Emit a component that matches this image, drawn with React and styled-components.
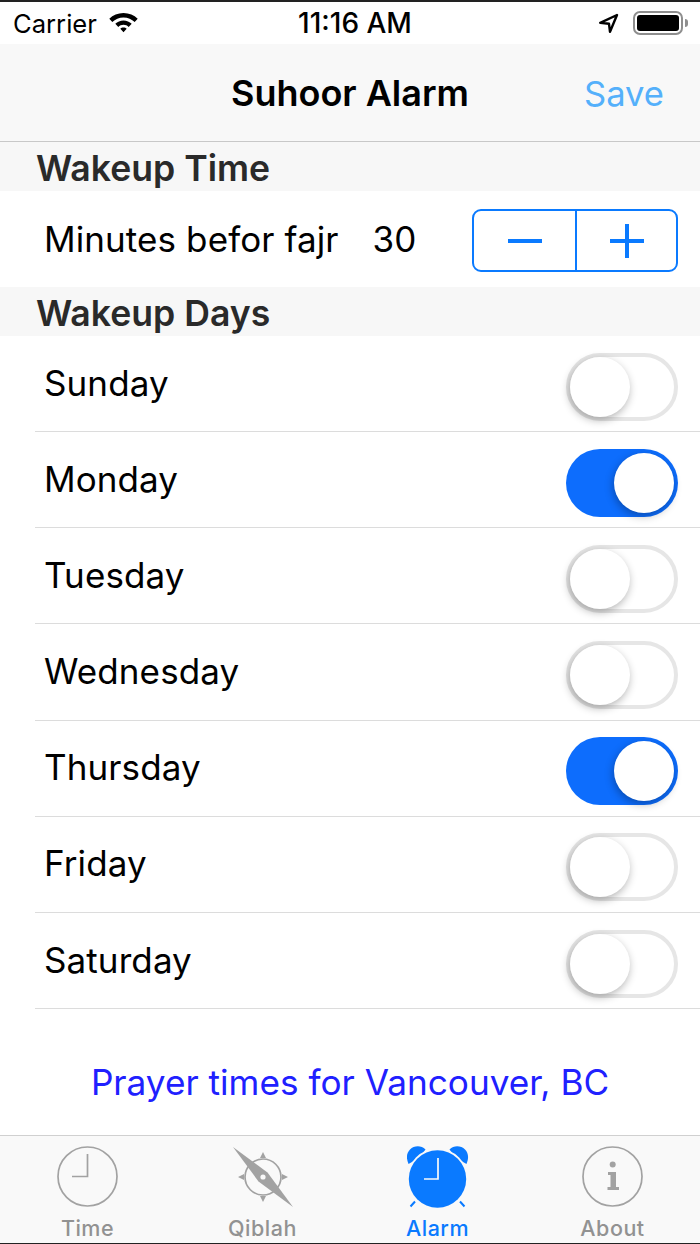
import styled, { createGlobalStyle } from "styled-components";

const GlobalStyle = createGlobalStyle`
  html, body {
    margin: 0;
    padding: 0;
    background: #fff;
  }
  body {
    font-family: "Inter", "Liberation Sans", sans-serif;
  }
`;

const Phone = styled.div`
  width: 700px;
  height: 1244px;
  display: flex;
  flex-direction: column;
  background: #fff;
  overflow: hidden;
  border-top: 2px solid #222;
  border-bottom: 1px solid #222;
  box-sizing: border-box;
`;

const StatusBar = styled.div`
  height: 42px;
  display: grid;
  grid-template-columns: 1fr auto 1fr;
  align-items: center;
  padding: 0 17px 0 13px;
  color: #000;
`;

const StatusLeft = styled.div`
  display: flex;
  align-items: center;
  gap: 11px;
  font-size: 25.6px;
`;

const StatusTime = styled.div`
  margin-left: 14px;
  font-size: 28px;
  font-weight: 500;
`;

const StatusRight = styled.div`
  display: flex;
  align-items: center;
  justify-content: flex-end;
  gap: 14px;
`;

const Battery = styled.div`
  position: relative;
  width: 50px;
  height: 24px;
  border: 2px solid #8e8e8e;
  border-radius: 7px;
  box-sizing: border-box;
  padding: 2px;
  &::before {
    content: "";
    display: block;
    height: 100%;
    background: #000;
    border-radius: 3px;
  }
  &::after {
    content: "";
    position: absolute;
    right: -7px;
    top: 6px;
    width: 3px;
    height: 8px;
    background: #8e8e8e;
    border-radius: 0 3px 3px 0;
  }
`;

const NavBar = styled.div`
  height: 98px;
  display: grid;
  grid-template-columns: 1fr auto 1fr;
  align-items: center;
  background: #f8f8f8;
  border-bottom: 1px solid #c8c8c8;
  box-sizing: border-box;
`;

const NavTitle = styled.div`
  grid-column: 2;
  font-size: 36px;
  font-weight: 600;
  color: #000;
`;

const SaveButton = styled.div`
  justify-self: end;
  margin-right: 36px;
  font-size: 34.6px;
  color: #54b0fb;
`;

const SectionHeader = styled.div`
  height: 49px;
  display: flex;
  align-items: center;
  padding: 4px 0 0 36px;
  background: #f7f7f7;
  font-size: 35.6px;
  font-weight: 600;
  color: #2a2a2a;
  box-sizing: border-box;
`;

const StepperRow = styled.div`
  height: 96px;
  display: flex;
  align-items: center;
  padding: 0 22px 0 44px;
  font-size: 35px;
  letter-spacing: 0.1px;
  color: #000;
`;

const StepperValue = styled.span`
  margin-left: 34px;
`;

const Stepper = styled.div`
  margin: 3px 0 0 auto;
  width: 206px;
  height: 63px;
  display: grid;
  grid-template-columns: 1fr 1fr;
  border: 2px solid #0a7aff;
  border-radius: 9px;
  box-sizing: border-box;
`;

const StepperButton = styled.div`
  display: flex;
  align-items: center;
  justify-content: center;
  color: #0a7aff;
  & + & {
    border-left: 2px solid #0a7aff;
  }
`;

const DayList = styled.div`
  padding-left: 35px;
`;

const DayRow = styled.div`
  height: 96.17px;
  display: flex;
  align-items: center;
  justify-content: space-between;
  padding: 0 22px 2px 9px;
  border-bottom: 1px solid #dcdcdc;
  box-sizing: border-box;
  font-size: 35px;
  letter-spacing: 0.1px;
  color: #000;
`;

const Switch = styled.div`
  position: relative;
  margin-top: 8px;
  width: 112px;
  height: 68px;
  border-radius: 34px;
  box-sizing: border-box;
  background: ${(p) => (p.$on ? "#0d6dfd" : "#fff")};
  border: ${(p) => (p.$on ? "none" : "4px solid #e6e6e6")};
`;

const Knob = styled.div`
  position: absolute;
  top: ${(p) => (p.$on ? "4px" : "0")};
  ${(p) => (p.$on ? "right: 4px;" : "left: 0;")}
  width: 60px;
  height: 60px;
  border-radius: 50%;
  background: #fff;
  box-shadow: -1px 3px 8px rgba(0, 0, 0, 0.3);
`;

const LocationLine = styled.div`
  flex: 1;
  display: flex;
  align-items: center;
  justify-content: center;
  padding-top: 19px;
  font-size: 35.2px;
  color: #2020ff;
`;

const TabBar = styled.div`
  height: 108px;
  display: grid;
  grid-template-columns: repeat(4, 1fr);
  background: #f9f9f9;
  border-top: 1px solid #d0d0d0;
  box-sizing: border-box;
`;

const Tab = styled.div`
  display: flex;
  flex-direction: column;
  align-items: center;
  padding-top: 10px;
  color: ${(p) => (p.$active ? "#0a7aff" : "#929292")};
  font-size: 21.5px;
  font-weight: 500;
  letter-spacing: 0.5px;
  svg {
    display: block;
    height: 62px;
    width: 62px;
    color: ${(p) => (p.$active ? "#0a7aff" : "#a2a2a2")};
  }
  span {
    margin-top: 7px;
  }
`;

const WifiIcon = () => (
  <svg width="31" height="22" viewBox="0 0 30 22" fill="currentColor">
    <path d="M15 1C9.4 1 4.4 3.2.8 6.800l3 3.200C6.700 7.200 10.600 5.400 15 5.400s8.300 1.800 11.200 4.600l3-3.200C25.600 3.200 20.600 1 15 1z" />
    <path d="M15 8.400c-3.200 0-6.100 1.300-8.200 3.300l3 3.200c1.300-1.300 3.200-2.100 5.200-2.100s3.900.8 5.200 2.100l3-3.200c-2.100-2-5-3.300-8.200-3.300z" />
    <path d="M15 15.500c-1.300 0-2.400.5-3.200 1.300L15 20.300l3.200-3.500c-.8-.8-1.900-1.300-3.200-1.300z" />
  </svg>
);

const LocationIcon = () => (
  <svg width="21" height="21" viewBox="0 0 21 21" fill="none" stroke="currentColor" strokeWidth="2.4" strokeLinejoin="round">
    <path d="M19 2L2.200 9.800l8.800 1 1 8z" />
  </svg>
);

const MinusIcon = () => (
  <svg width="34" height="6" viewBox="0 0 34 6">
    <rect y="1" width="34" height="4" fill="currentColor" />
  </svg>
);

const PlusIcon = () => (
  <svg width="34" height="34" viewBox="0 0 34 34">
    <rect y="15" width="34" height="4" fill="currentColor" />
    <rect x="15" width="4" height="34" fill="currentColor" />
  </svg>
);

const ClockIcon = () => (
  <svg viewBox="0 0 62 62" fill="none" stroke="currentColor">
    <circle cx="30.5" cy="30.5" r="29.5" strokeWidth="1.7" />
    <path d="M30.5 8v22.5H15" strokeWidth="1.7" />
  </svg>
);

const CompassIcon = () => (
  <svg viewBox="0 0 62 62" fill="currentColor">
    <circle cx="31" cy="31" r="18" fill="none" stroke="currentColor" strokeWidth="1.7" />
    <path d="M31 6l-3 6h6zM31 56l-3-6h6zM6 31l6-3v6zM56 31l-6-3v6z" />
    <path d="M1 1L35.500 26.500 61 61 26.500 35.500z" />
    <circle cx="31" cy="31" r="2.6" fill="#f9f9f9" />
  </svg>
);

const AlarmIcon = () => (
  <svg viewBox="0 0 62 62" fill="currentColor">
    <path d="M1.500 18C-1 12-.5 7 3 3.500 7-.5 14-1 18.500 3.500L12 12z" />
    <path d="M59.500 18C62 12 61.500 7 58 3.500 54-.5 47-1 42.500 3.500L49 12z" />
    <circle cx="30.500" cy="33" r="30.500" fill="#f9f9f9" />
    <path d="M8 55.500l-4.500 5M53 55.500l4.500 5" stroke="currentColor" strokeWidth="2" />
    <circle cx="30.500" cy="33" r="28.700" />
    <path d="M31 12v21H17" fill="none" stroke="#f9f9f9" strokeWidth="1.7" />
  </svg>
);

const InfoIcon = () => (
  <svg viewBox="0 0 62 62" fill="none" stroke="currentColor">
    <circle cx="30.5" cy="30.5" r="29.5" strokeWidth="1.7" />
    <circle cx="30.7" cy="18.5" r="3" fill="currentColor" stroke="none" />
    <path d="M26 26h8v15h3v3H25.500v-3h3V29H26z" fill="currentColor" stroke="none" />
  </svg>
);

const days = [
  { name: "Sunday", on: false },
  { name: "Monday", on: true },
  { name: "Tuesday", on: false },
  { name: "Wednesday", on: false },
  { name: "Thursday", on: true },
  { name: "Friday", on: false },
  { name: "Saturday", on: false },
];

export default function App() {
  return (
    <>
      <GlobalStyle />
      <Phone>
        <StatusBar>
          <StatusLeft>
            Carrier
            <WifiIcon />
          </StatusLeft>
          <StatusTime>11:16 AM</StatusTime>
          <StatusRight>
            <LocationIcon />
            <Battery />
          </StatusRight>
        </StatusBar>
        <NavBar>
          <NavTitle>Suhoor Alarm</NavTitle>
          <SaveButton>Save</SaveButton>
        </NavBar>
        <SectionHeader>Wakeup Time</SectionHeader>
        <StepperRow>
          Minutes befor fajr
          <StepperValue>30</StepperValue>
          <Stepper>
            <StepperButton><MinusIcon /></StepperButton>
            <StepperButton><PlusIcon /></StepperButton>
          </Stepper>
        </StepperRow>
        <SectionHeader>Wakeup Days</SectionHeader>
        <DayList>
          {days.map((day) => (
            <DayRow key={day.name}>
              {day.name}
              <Switch $on={day.on}>
                <Knob $on={day.on} />
              </Switch>
            </DayRow>
          ))}
        </DayList>
        <LocationLine>Prayer times for Vancouver, BC</LocationLine>
        <TabBar>
          <Tab><ClockIcon /><span>Time</span></Tab>
          <Tab><CompassIcon /><span>Qiblah</span></Tab>
          <Tab $active><AlarmIcon /><span>Alarm</span></Tab>
          <Tab><InfoIcon /><span>About</span></Tab>
        </TabBar>
      </Phone>
    </>
  );
}
